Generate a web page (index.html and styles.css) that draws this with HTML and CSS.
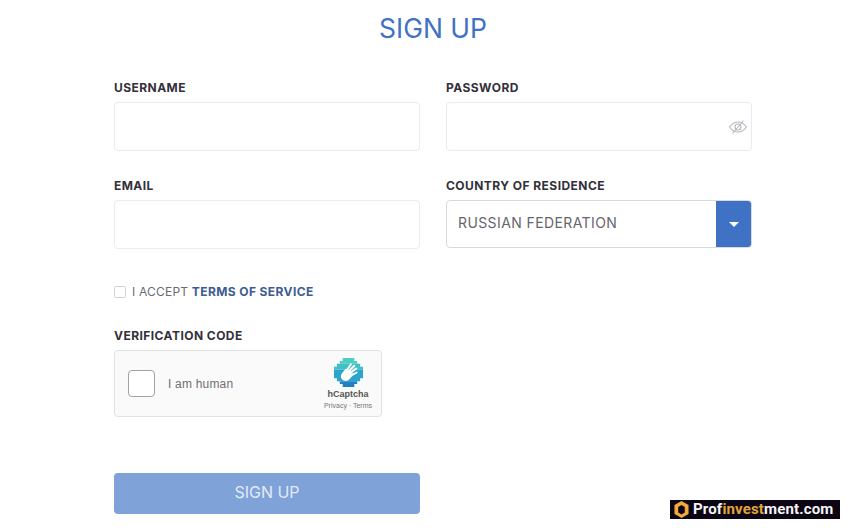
FILE: index.html
```html
<!DOCTYPE html>
<html lang="en">
<head>
<meta charset="utf-8">
<title>Sign up</title>
<link rel="stylesheet" href="styles.css">
</head>
<body>
<main class="page">
  <h1 class="title">SIGN UP</h1>
  <form class="form">
    <div class="grid">
      <div class="field">
        <label class="label">USERNAME</label>
        <div class="input"></div>
      </div>
      <div class="field">
        <label class="label">PASSWORD</label>
        <div class="input input-eye">
          <svg class="eye" viewBox="0 0 20 16" width="20" height="16" fill="none" stroke="#b4b9bd" stroke-width="1.1">
            <path d="M1.500 8C4 4.600 6.800 3 10 3s6 1.600 8.500 5C16 11.400 13.200 13 10 13S4 11.400 1.500 8Z"/>
            <circle cx="10" cy="8" r="3"/>
            <path d="M4.500 14.500 15.500 1.500"/>
          </svg>
        </div>
      </div>
      <div class="field">
        <label class="label">EMAIL</label>
        <div class="input"></div>
      </div>
      <div class="field">
        <label class="label">COUNTRY OF RESIDENCE</label>
        <div class="select">
          <span class="select-value">RUSSIAN FEDERATION</span>
          <span class="select-btn"><span class="caret"></span></span>
        </div>
      </div>
    </div>
    <div class="accept">
      <span class="check"></span>
      <span class="accept-text">I ACCEPT <a class="terms">TERMS OF SERVICE</a></span>
    </div>
    <label class="label code-label">VERIFICATION CODE</label>
    <div class="captcha">
      <span class="captcha-box"></span>
      <span class="captcha-text">I am human</span>
      <div class="captcha-brand">
        <svg class="captcha-logo" viewBox="0 0 30 30" width="29" height="29">
          <path fill="#4fcdc0" d="M9 0h12v3h3v3h-18V3h3z"/>
          <path fill="#3fc0c4" d="M3 6h24v3h3v3H0V9h3z"/>
          <path fill="#2ba5cf" d="M0 12h30v9h-3v3H3v-3H0z"/>
          <path fill="#1f80c4" d="M6 24h18v3h-3v3H9v-3H6z"/>
          <g fill="none" stroke="#fff" stroke-linecap="round">
            <path stroke-width="2" d="M13 13 17.500 6.500"/>
            <path stroke-width="2" d="M15 14 21 8"/>
            <path stroke-width="2" d="M16.500 15.500 23 11"/>
            <path stroke-width="2" d="M18 18 23.500 15"/>
          </g>
          <path fill="#fff" d="M12 11c1 0 1.500 1 1.500 2L17 12l2 3 1 2-3 4c-2 2.500-5 3.500-7.500 2-2-1.300-3-3.500-2-6 .8-1.700 3-4 4.500-6z"/>
        </svg>
        <span class="captcha-name">hCaptcha</span>
        <span class="captcha-links">Privacy · Terms</span>
      </div>
    </div>
    <button class="submit" type="button">SIGN UP</button>
  </form>
</main>
<div class="watermark">
  <svg class="wm-logo" viewBox="0 0 16 18" width="15" height="17"><path fill="#f2a93b" fill-rule="evenodd" d="M8 0l7.500 4.300v9.400L8 18l-3.500-2v-3.800L8 14.200l3.500-2V6.300L8 4.300 4.500 6.300v9.700l-4-2.300V4.300z"/></svg>
  <span class="wm-text">Prof<span class="wm-gold">invest</span>ment.com</span>
</div>
</body>
</html>
```
FILE: styles.css
```css
* { box-sizing: border-box; }
html, body { margin: 0; padding: 0; background: #fff; }
body { width: 850px; height: 529px; overflow: hidden; position: relative; font-family: Inter, "Liberation Sans", sans-serif; }
.page { width: 638px; margin-left: 114px; }
.title { margin: 0; padding-top: 12px; width: 638px; text-align: center; font-size: 26.500px; line-height: 32px; font-weight: 400; color: #3f72c4; }
.form { margin-top: 36px; }
.grid { display: grid; grid-template-columns: 306px 306px; column-gap: 26px; row-gap: 27px; }
.label { display: block; font-size: 12px; line-height: 16px; font-weight: 700; color: #33303a; letter-spacing: 0.45px; }
.field .label { margin-bottom: 6px; }
.input { height: 49px; background: #fff; border: 1px solid #eaeaf0; border-radius: 4px; display: flex; align-items: center; justify-content: flex-end; padding-right: 3px; }
.eye { display: block; margin-top: 1px; }
.select { height: 48px; display: flex; border: 1px solid #d9d9dc; border-radius: 4px; overflow: hidden; }
.select-value { flex: 1; padding-left: 11px; font-size: 14px; line-height: 43px; color: #66666c; letter-spacing: 0.4px; }
.select-btn { width: 35px; background: #3f72c4; display: flex; align-items: center; justify-content: center; }
.caret { width: 0; height: 0; border-left: 5px solid transparent; border-right: 5px solid transparent; border-top: 5px solid #fff; }
.accept { display: flex; align-items: center; margin-top: 35px; height: 16px; }
.check { width: 12px; height: 12px; border: 1px solid #d4d4d8; border-radius: 2px; margin-right: 6px; background: #fff; }
.accept-text { font-size: 12px; line-height: 16px; color: #6b6b73; letter-spacing: 0.2px; }
.terms { font-weight: 700; color: #3d5c94; letter-spacing: 0.4px; }
.code-label { margin-top: 28px; margin-bottom: 6px; }
.captcha { width: 268px; height: 67px; background: #fafafa; border: 1px solid #e2e2e2; border-radius: 4px; display: flex; align-items: center; position: relative; padding-left: 13px; }
.captcha-box { width: 27px; height: 27px; background: #fff; border: 1px solid #a2a2a2; border-radius: 4px; }
.captcha-text { margin-left: 13px; font-family: "Liberation Sans", Arial, sans-serif; font-size: 12px; letter-spacing: 0.2px; color: #6f6f6f; }
.captcha-brand { margin-left: auto; width: 60px; margin-right: 3px; display: flex; flex-direction: column; align-items: center; }
.captcha-logo { display: block; margin-top: 1px; }
.captcha-name { margin-top: 1px; font-family: "Liberation Sans", Arial, sans-serif; font-size: 9px; line-height: 12px; font-weight: 700; color: #555; }
.captcha-links { margin-top: 1px; font-family: "Liberation Sans", Arial, sans-serif; font-size: 7px; line-height: 9px; color: #777; white-space: nowrap; }
.submit { display: block; margin-top: 56px; width: 306px; height: 41px; background: #7fa2d9; border: 0; border-radius: 4px; color: #e3ebf6; font-family: inherit; font-size: 16px; font-weight: 400; padding: 0 0 3px; }
.watermark { position: absolute; left: 670px; top: 500px; width: 170px; height: 19px; background: #0c0614; display: flex; align-items: center; padding-left: 4px; gap: 4px; }
.wm-logo { flex: none; display: block; }
.wm-text { font-family: Roboto, "Liberation Sans", sans-serif; font-size: 15px; line-height: 19px; font-weight: 700; color: #f4f4f4; letter-spacing: 0.15px; white-space: nowrap; }
.wm-gold { color: #e0a53a; }
```
